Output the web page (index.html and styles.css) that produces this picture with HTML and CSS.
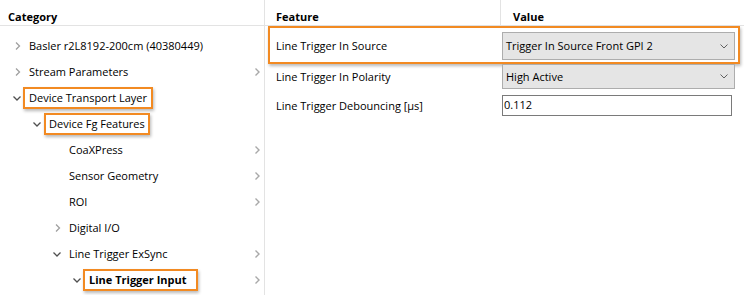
FILE: index.html
```html
<!DOCTYPE html>
<html>
<head>
<meta charset="utf-8">
<link rel="stylesheet" href="styles.css">
</head>
<body>
<div class="app">
  <section class="tree">
    <div class="head">Category</div>
    <div class="rows">
      <div class="node lvl0"><span class="tog"><svg viewBox="0 0 10 10"><path class="col" d="M4 1.5L7.5 5L4 8.5"/></svg></span><span class="lbl">Basler r2L8192-200cm (40380449)</span></div>
      <div class="node lvl0"><span class="tog"><svg viewBox="0 0 10 10"><path class="col" d="M4 1.5L7.5 5L4 8.5"/></svg></span><span class="lbl">Stream Parameters</span><svg class="more" viewBox="0 0 8 10"><path d="M2.5 1.5L6 5L2.5 8.5"/></svg></div>
      <div class="node lvl0"><span class="tog"><svg viewBox="0 0 10 10"><path class="exp" d="M1.5 3.5L5 7L8.5 3.5"/></svg></span><span class="lbl mark mark-a">Device Transport Layer</span></div>
      <div class="node lvl1"><span class="tog"><svg viewBox="0 0 10 10"><path class="exp" d="M1.5 3.5L5 7L8.5 3.5"/></svg></span><span class="lbl mark mark-b">Device Fg Features</span></div>
      <div class="node lvl2"><span class="tog"></span><span class="lbl">CoaXPress</span><svg class="more" viewBox="0 0 8 10"><path d="M2.5 1.5L6 5L2.5 8.5"/></svg></div>
      <div class="node lvl2"><span class="tog"></span><span class="lbl">Sensor Geometry</span><svg class="more" viewBox="0 0 8 10"><path d="M2.5 1.5L6 5L2.5 8.5"/></svg></div>
      <div class="node lvl2"><span class="tog"></span><span class="lbl">ROI</span><svg class="more" viewBox="0 0 8 10"><path d="M2.5 1.5L6 5L2.5 8.5"/></svg></div>
      <div class="node lvl2"><span class="tog"><svg viewBox="0 0 10 10"><path class="col" d="M4 1.5L7.5 5L4 8.5"/></svg></span><span class="lbl">Digital I/O</span></div>
      <div class="node lvl2"><span class="tog"><svg viewBox="0 0 10 10"><path class="exp" d="M1.5 3.5L5 7L8.5 3.5"/></svg></span><span class="lbl">Line Trigger ExSync</span><svg class="more" viewBox="0 0 8 10"><path d="M2.5 1.5L6 5L2.5 8.5"/></svg></div>
      <div class="node lvl3"><span class="tog"><svg viewBox="0 0 10 10"><path class="exp" d="M1.5 3.5L5 7L8.5 3.5"/></svg></span><span class="lbl mark mark-c bold">Line Trigger Input</span><svg class="more" viewBox="0 0 8 10"><path d="M2.5 1.5L6 5L2.5 8.5"/></svg></div>
    </div>
  </section>
  <section class="props">
    <div class="phead">
      <div class="pcol feat">Feature</div>
      <div class="pcol val">Value</div>
    </div>
    <div class="prow hl r1">
      <div class="fname">Line Trigger In Source</div>
      <div class="combo big"><span>Trigger In Source Front GPI 2</span><svg viewBox="0 0 8 5"><path d="M0.5 0.5L4 4L7.5 0.5"/></svg></div>
    </div>
    <div class="prow r2">
      <div class="fname">Line Trigger In Polarity</div>
      <div class="combo"><span>High Active</span><svg viewBox="0 0 8 5"><path d="M0.5 0.5L4 4L7.5 0.5"/></svg></div>
    </div>
    <div class="prow r3">
      <div class="fname">Line Trigger Debouncing [µs]</div>
      <div class="field">0.112</div>
    </div>
  </section>
</div>
</body>
</html>
```

FILE: styles.css
```css
* { box-sizing: border-box; }
html, body {
  margin: 0;
  padding: 0;
  background: #fff;
}
body {
  font-family: "Open Sans", "Noto Sans", sans-serif;
  font-size: 11px;
  color: #000;
  width: 744px;
  height: 295px;
  overflow: hidden;
}
.app {
  display: grid;
  grid-template-columns: 264px 1px 1fr;
  height: 295px;
}
.app::before {
  content: "";
  grid-column: 2;
  grid-row: 1;
  background: #e3e3e3;
}
.tree { grid-column: 1; grid-row: 1; }
.props { grid-column: 3; grid-row: 1; }

.head {
  height: 26px;
  border-bottom: 1px solid #e3e3e3;
  padding: 9px 0 0 8px;
  line-height: 16px;
  font-weight: 700;
}
.rows { padding-top: 7px; }
.node {
  height: 26px;
  display: flex;
  align-items: center;
  padding-right: 3px;
  line-height: 16px;
  white-space: nowrap;
}
.lvl0 { padding-left: 12px; }
.lvl1 { padding-left: 32px; }
.lvl2 { padding-left: 52px; }
.lvl3 { padding-left: 72px; }
.tog {
  width: 17px;
  height: 10px;
  flex: none;
  display: flex;
}
.tog svg { width: 10px; height: 10px; }
.tog path {
  fill: none;
  stroke-width: 1.3;
}
.tog .col { stroke: #a0a0a0; }
.tog .exp { stroke: #505050; }
.more {
  margin-left: auto;
  width: 8px;
  height: 10px;
  flex: none;
}
.more path {
  fill: none;
  stroke: #a8a8a8;
  stroke-width: 1.4;
}
.bold { font-weight: 700; }
.mark {
  border: 2px solid #f28a22;
  margin-left: -6px;
  padding: 1px 4px 1px 4px;
  line-height: 16px;
  box-shadow: 1px 2px 3px rgba(0,0,0,0.28);
}
.mark-b { padding-right: 3px; margin-left: -5px; padding-left: 3px; }
.mark-c { padding-right: 9px; }

.phead {
  height: 26px;
  border-bottom: 1px solid #e3e3e3;
  display: grid;
  grid-template-columns: 235px 1fr;
}
.pcol {
  padding: 9px 0 0 11px;
  line-height: 16px;
  font-weight: 700;
}
.val {
  border-left: 1px solid #e3e3e3;
  padding-left: 12px;
}
.prow {
  display: grid;
  grid-template-columns: 226px 1fr;
  align-items: center;
  padding: 0 9px 0 11px;
  line-height: 16px;
  white-space: nowrap;
}
.prow.hl {
  margin: 0 4px 0 3px;
  border: 2px solid #f28a22;
  padding: 2px 3px 0 6px;
  box-shadow: 1px 2px 3px rgba(0,0,0,0.28);
}
.r1 { height: 38px; }
.r2 { height: 25px; }
.r3 { height: 32px; padding-top: 1px; }
.combo {
  height: 25px;
  background: #e5e5e5;
  border: 1px solid #adadad;
  display: flex;
  align-items: center;
  padding: 0 6px 0 3px;
}
.combo.big { height: 28px; }
.combo span { flex: 1; }
.combo svg {
  width: 8px;
  height: 5px;
}
.combo path {
  fill: none;
  stroke: #606060;
  stroke-width: 1;
}
.field {
  height: 21px;
  border: 1px solid #7a7a7a;
  background: #fff;
  padding: 1px 2px 0 1px;
  margin-right: 3px;
}
```
